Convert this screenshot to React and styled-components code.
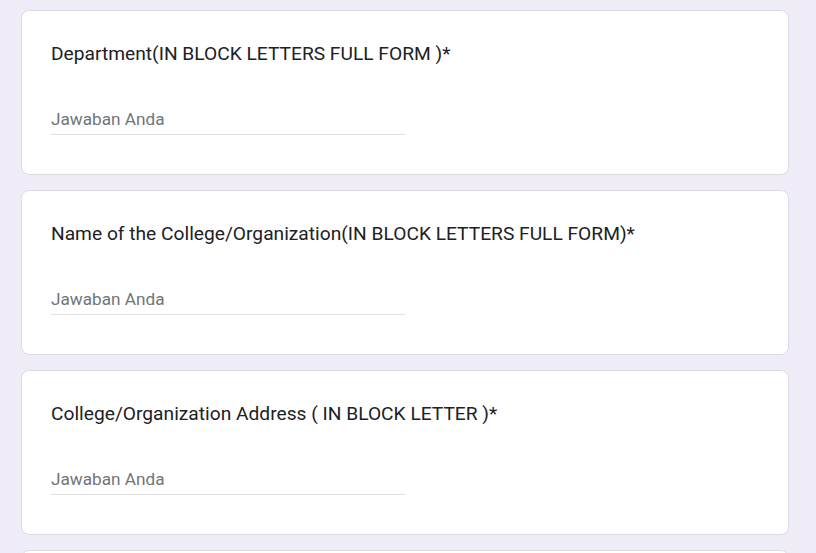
import React from 'react';
import styled, { createGlobalStyle } from 'styled-components';

const GlobalStyle = createGlobalStyle`
  html, body {
    margin: 0;
    padding: 0;
    background: #efebf7;
    overflow: hidden;
  }
`;

const Page = styled.div`
  height: 100vh;
  background: #efebf7;
  padding: 10px 27px 0 21px;
  box-sizing: border-box;
  display: flex;
  flex-direction: column;
  gap: 15px;
  font-family: Roboto, "Liberation Sans", sans-serif;
  overflow: hidden;
`;

const Card = styled.div`
  background: #fff;
  border: 1px solid #dadce0;
  border-radius: 8px;
  height: 165px;
  box-sizing: border-box;
  padding: 31px 29px 0;
  flex-shrink: 0;
`;

const Title = styled.div`
  font-size: 19.2px;
  line-height: 24px;
  color: #202124;
  font-weight: 400;
`;

const Answer = styled.div`
  margin-top: 41px;
  width: 354px;
  font-size: 17.2px;
  line-height: 24px;
  color: #70757a;
  padding-bottom: 3px;
  border-bottom: 1px solid #e0e0e0;
`;

const questions = [
  'Department(IN BLOCK LETTERS FULL FORM )*',
  'Name of the College/Organization(IN BLOCK LETTERS FULL FORM)*',
  'College/Organization Address ( IN BLOCK LETTER )*',
];

export default function App() {
  return (
    <>
      <GlobalStyle />
      <Page>
        {questions.map((q) => (
          <Card key={q}>
            <Title>{q}</Title>
            <Answer>Jawaban Anda</Answer>
          </Card>
        ))}
        <Card />
      </Page>
    </>
  );
}
